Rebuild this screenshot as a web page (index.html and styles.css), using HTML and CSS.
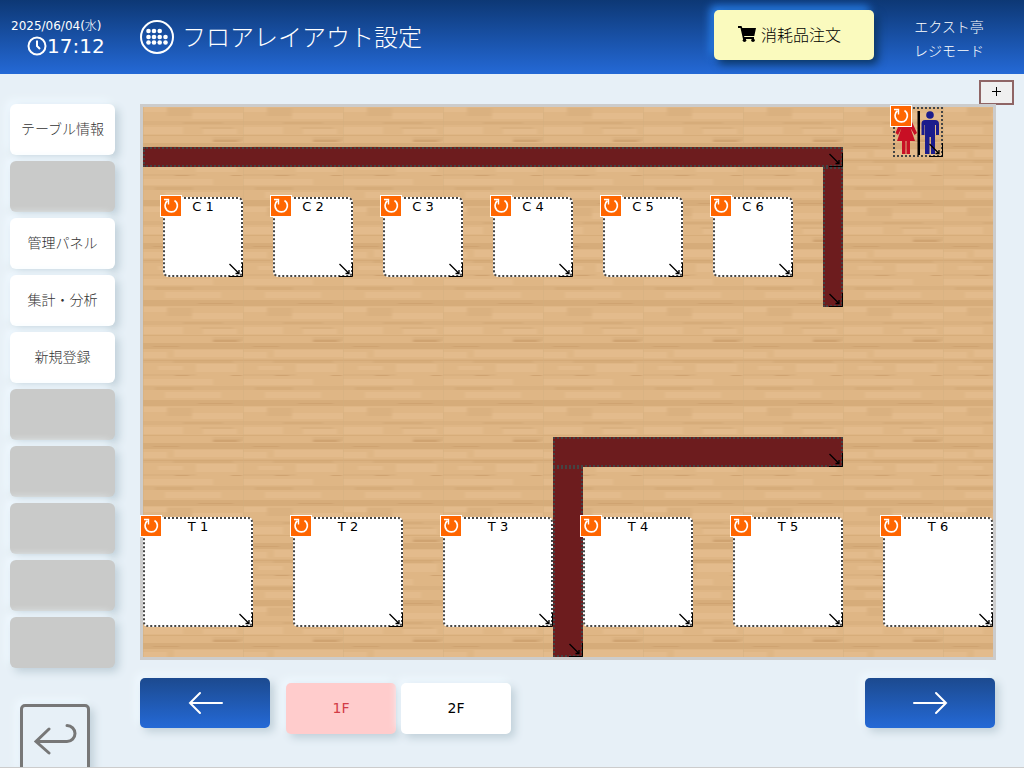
FILE: index.html
```html
<!DOCTYPE html>
<html lang="ja">
<head>
  <meta charset="UTF-8">
  <title>フロアレイアウト設定</title>
  <link rel="stylesheet" href="styles.css">
</head>
<body>
  <svg class="defs" aria-hidden="true">
    <symbol id="icon-rotate" viewBox="0 0 20 20">
      <path d="M13.500 4.500A6.200 6.200 0 1 1 6.500 4.800" fill="none" stroke="#fff" stroke-width="1.700"/>
      <path d="M3 3.500H7.500V8.500" fill="none" stroke="#fff" stroke-width="1.400"/>
    </symbol>
    <symbol id="icon-resize" viewBox="0 0 15 15">
      <path d="M1.500 2L10.500 11M11 8V11.500H7.500" fill="none" stroke="#000" stroke-width="1.300"/>
      <path d="M14.500 1V14.500H1" fill="none" stroke="#000"/>
    </symbol>
    <symbol id="icon-toilet" viewBox="0 0 50 50">
      <g fill="#c80f24">
        <circle cx="13" cy="8" r="4"/>
        <path d="M9 13H17Q18 13 19 15L24 26L21.500 28L17.500 21L22 34H4L8.500 21L5 28L2.500 26L7 15Q8 13 9 13Z"/>
        <path d="M9 33H12.500V47H9ZM13.500 33H17V47H13.500Z"/>
      </g>
      <path d="M24.500 4H27V48H24.500Z"/>
      <g fill="#1b1c8c">
        <circle cx="37" cy="8" r="3.800"/>
        <path d="M32 13H42Q46 13 46 17V28H43V18H42V47H38V30H36.500V47H32V18H31.500V28H28.500V17Q28.500 13 32 13Z"/>
      </g>
    </symbol>
  </svg>

  <header class="header">
    <div class="datetime">
      <div class="date">2025/06/04(水)</div>
      <div class="time">
        <svg class="clock" viewBox="0 0 20 20" fill="none" stroke="#fff" stroke-width="2">
          <circle cx="10" cy="10" r="8.500"/>
          <path d="M10 4.500V10L13 13"/>
        </svg>17:12
      </div>
    </div>
    <svg class="logo" viewBox="0 0 34 34" fill="#fff">
      <circle cx="17" cy="17" r="16" fill="none" stroke="#fff" stroke-width="2"/>
      <circle cx="8.500" cy="11" r="2.300"/><circle cx="14" cy="11" r="2.300"/><circle cx="19.700" cy="11" r="2.300"/>
      <circle cx="8.500" cy="17" r="2.300"/><circle cx="14" cy="17" r="2.300"/><circle cx="19.700" cy="17" r="2.300"/><circle cx="25.500" cy="17" r="2.300"/>
      <circle cx="8.500" cy="22.500" r="2.300"/><circle cx="14" cy="22.500" r="2.300"/><circle cx="19.700" cy="22.500" r="2.300"/><circle cx="25.500" cy="22.500" r="2.300"/>
    </svg>
    <h1 class="title">フロアレイアウト設定</h1>
    <button class="order-btn">
      <svg class="cart" viewBox="0 0 18 16">
        <path d="M0 0H3.500L4.300 2H18L16.300 10H6L6.400 11H16V13H5L2.500 2H0Z"/>
        <circle cx="6.500" cy="14.200" r="1.800"/><circle cx="15" cy="14.200" r="1.800"/>
      </svg>消耗品注文
    </button>
    <div class="shop">
      <div>エクスト亭</div>
      <div>レジモード</div>
    </div>
  </header>

  <div class="container">
    <nav class="sidebar">
      <button class="menu-btn">テーブル情報</button>
      <button class="menu-btn" disabled></button>
      <button class="menu-btn">管理パネル</button>
      <button class="menu-btn">集計・分析</button>
      <button class="menu-btn">新規登録</button>
      <button class="menu-btn" disabled></button>
      <button class="menu-btn" disabled></button>
      <button class="menu-btn" disabled></button>
      <button class="menu-btn" disabled></button>
      <button class="menu-btn" disabled></button>
      <button class="back-btn" aria-label="戻る">
        <svg viewBox="0 0 44 32" fill="none" stroke="#777" stroke-width="3" stroke-linecap="round">
          <path d="M16 6L3 18.500L16 30M4 18.500H34A8 8 0 0 0 34 2.500"/>
        </svg>
      </button>
    </nav>

    <main class="main">
      <div class="toolbar">
        <button class="add-btn" aria-label="追加"><svg viewBox="0 0 10 10"><path d="M4.500 0V9M0 4.500H9" stroke="#000"/></svg></button>
      </div>

      <div class="floor" id="floor">
        <svg class="wood" width="100%" height="100%" aria-hidden="true">
          <defs>
            <filter id="grain" x="0" y="0" width="100%" height="100%">
              <feGaussianBlur stdDeviation="1.500 0.500"/>
            </filter>
            <pattern id="wood" width="100" height="100" patternUnits="userSpaceOnUse">
              <rect width="100" height="100" fill="#dfb685"/>
              <g filter="url(#grain)">
                <path d="M-5 -5H105V105H-5Z" fill="#dfb685"/>
                <g fill="#e3bb8c">
                  <path d="M0 0H24V5H0ZM49 6H105V12H49ZM-5 20H40V27H-5ZM60 22H94V27H60ZM31 43H105V50H31ZM-5 45H24V51H-5ZM53 57H94V65H53ZM15 59H40V63H15ZM-5 72H70V78H-5ZM22 85H78V91H22Z"/>
                </g>
                <g fill="#dab180">
                  <path d="M-5 14H105V18H-5ZM24 1H49V9H24ZM70 30H105V34H70ZM-5 52H105V56H-5ZM-5 67H53V69H-5ZM-5 79H105V83H-5ZM58 20H90V22H58Z"/>
                </g>
                <g fill="#d6ac7a">
                  <path d="M-5 36H105V42H-5ZM70 32H98V35H70ZM-5 93H105V99H-5ZM30 53H90V56H30ZM40 15H80V17H40ZM12 80H50V83H12Z"/>
                </g>
                <g fill="#cfa371">
                  <path d="M70 33H94V35H70ZM-5 28H105V28.500H-5ZM-5 53H105V53.600H-5ZM32 68H46V69H32ZM88 68H99V69H88ZM10 39H36V40H10ZM55 96H90V97H55Z"/>
                </g>
              </g>
              <path d="M0 0H1V100H0Z" fill="#cfae80" opacity=".4"/>
            </pattern>
          </defs>
          <rect width="100%" height="100%" fill="url(#wood)"/>
        </svg>
      </div>

      <div class="footer">
        <button class="arrow-btn" aria-label="前へ">
          <svg viewBox="0 0 36 24"><path d="M13 2L3 12L13 22M3 12H35"/></svg>
        </button>
        <div class="tabs">
          <button class="tab active">1F</button>
          <button class="tab">2F</button>
        </div>
        <button class="arrow-btn next" aria-label="次へ">
          <svg viewBox="0 0 36 24"><path d="M24 2L34 12L24 22M34 12H2"/></svg>
        </button>
      </div>
    </main>
  </div>

  <script>
    const items = [
      { type: 'wall', x: 0, y: 40, w: 700, h: 20 },
      { type: 'wall', x: 680, y: 60, w: 20, h: 140 },
      { type: 'wall', x: 410, y: 330, w: 290, h: 30 },
      { type: 'wall', x: 410, y: 360, w: 30, h: 190 },
      { type: 'toilet', x: 750, y: 0, w: 50, h: 50 },
      { type: 'table', name: 'C 1', x: 20, y: 90, w: 80, h: 80 },
      { type: 'table', name: 'C 2', x: 130, y: 90, w: 80, h: 80 },
      { type: 'table', name: 'C 3', x: 240, y: 90, w: 80, h: 80 },
      { type: 'table', name: 'C 4', x: 350, y: 90, w: 80, h: 80 },
      { type: 'table', name: 'C 5', x: 460, y: 90, w: 80, h: 80 },
      { type: 'table', name: 'C 6', x: 570, y: 90, w: 80, h: 80 },
      { type: 'table', name: 'T 1', x: 0, y: 410, w: 110, h: 110 },
      { type: 'table', name: 'T 2', x: 150, y: 410, w: 110, h: 110 },
      { type: 'table', name: 'T 3', x: 300, y: 410, w: 110, h: 110 },
      { type: 'table', name: 'T 4', x: 440, y: 410, w: 110, h: 110 },
      { type: 'table', name: 'T 5', x: 590, y: 410, w: 110, h: 110 },
      { type: 'table', name: 'T 6', x: 740, y: 410, w: 110, h: 110 }
    ];

    const floor = document.getElementById('floor');

    items.forEach(item => {
      const el = document.createElement('div');
      el.className = `item ${item.type}`;
      el.style.cssText = `left:${item.x}px;top:${item.y}px;width:${item.w}px;height:${item.h}px`;
      let html = '';
      if (item.type === 'toilet') html += '<svg class="toilet-icon"><use href="#icon-toilet"/></svg>';
      if (item.name) html += `<span class="name">${item.name}</span>`;
      // 壁は回転できない
      if (item.type !== 'wall') html += '<button class="rotate" aria-label="回転"><svg><use href="#icon-rotate"/></svg></button>';
      html += '<svg class="resize"><use href="#icon-resize"/></svg>';
      el.innerHTML = html;
      floor.appendChild(el);
    });
  </script>
</body>
</html>
```
FILE: styles.css
```css
* {
  box-sizing: border-box;
}
body {
  margin: 0;
  height: 100vh;
  overflow: hidden;
  display: flex;
  flex-direction: column;
  background: #e7f0f7;
  border-bottom: 1px solid #ccc;
  font-family: "DejaVu Sans", "Noto Sans CJK JP Light", "Noto Sans CJK JP", sans-serif;
  font-size: 14px;
}
button {
  font: inherit;
  padding: 0;
  border: none;
  cursor: pointer;
}
svg {
  display: block;
}
.defs {
  position: absolute;
  width: 0;
  height: 0;
}

/* ヘッダー */
.header {
  flex: none;
  height: 74px;
  display: flex;
  align-items: center;
  color: #fff;
  background: linear-gradient(#0d3875, #2469d6);
}
.datetime {
  width: 140px;
  padding-left: 11px;
}
.date {
  font-size: 12px;
  line-height: 18px;
}
.time {
  display: flex;
  align-items: center;
  padding-left: 16px;
  font-size: 20px;
  line-height: 22px;
}
.clock {
  width: 20px;
  height: 20px;
}
.logo {
  width: 34px;
  height: 34px;
}
.title {
  flex: 1;
  margin: 0 0 4px 8px;
  font-size: 24px;
  font-weight: normal;
}
.order-btn {
  display: flex;
  align-items: center;
  justify-content: center;
  gap: 5px;
  width: 160px;
  height: 50px;
  margin-bottom: 4px;
  padding: 0 9px 3px 0;
  border-radius: 5px;
  background: #fafabe;
  color: #000;
  font-size: 16px;
  box-shadow: 4px 4px 8px #0b3562, -4px -4px 8px #2a82f0;
}
.cart {
  width: 18px;
  height: 16px;
}
.shop {
  width: 150px;
  padding-top: 3px;
  text-align: center;
  line-height: 24px;
}

.container {
  flex: 1;
  display: flex;
  min-height: 0;
}

/* サイドメニュー */
.sidebar {
  flex: none;
  width: 140px;
  padding: 30px 0 0 10px;
  display: flex;
  flex-direction: column;
  gap: 6px;
}
.menu-btn {
  flex: none;
  width: 105px;
  height: 51px;
  padding-bottom: 3px;
  border-radius: 6px;
  background: #fff;
  color: #333;
  box-shadow: 4px 4px 8px #c0d0d9, -4px -4px 8px #f0f9ff;
}
.menu-btn:disabled {
  background: #c9cac9;
}
.back-btn {
  flex: none;
  width: 70px;
  height: 70px;
  margin: 30px 0 0 10px;
  padding: 0 10px;
  border: 3px solid #777;
  border-radius: 5px;
  background: #e7f0f7;
  box-shadow: 4px 4px 8px #c0d0d9, -4px -4px 8px #f0f9ff;
}

/* フロア */
.main {
  flex: 1;
  min-width: 0;
  padding: 6px 28px 0 0;
}
.toolbar {
  display: flex;
  justify-content: flex-end;
  margin-right: -18px;
}
.add-btn {
  display: flex;
  align-items: center;
  justify-content: center;
  width: 35px;
  height: 25px;
  margin-bottom: -1px;
  padding-bottom: 2px;
  border: 2px solid #8f6565;
  background: #efefef;
}
.add-btn svg {
  width: 10px;
  height: 10px;
}
.floor {
  position: relative;
  height: 556px;
  border: 3px solid #ccc;
}
.item {
  position: absolute;
  border: 2px dotted #444;
  text-align: center;
}
.wall {
  background: #6d1c1e;
}
.table {
  background: #fff;
  border-radius: 5px;
}
.name {
  display: block;
  font-size: 13px;
  line-height: 16px;
}
.toilet-icon {
  width: 50px;
  height: 50px;
  margin: -2px;
}
.rotate {
  position: absolute;
  top: -4px;
  left: -5px;
  width: 22px;
  height: 22px;
  border: 1px solid #fff;
  background: #ff6600;
}
.rotate svg {
  width: 20px;
  height: 20px;
}
.resize {
  position: absolute;
  right: -2px;
  bottom: -2px;
  width: 15px;
  height: 15px;
}

/* フッター */
.footer {
  display: flex;
  padding-top: 18px;
}
.arrow-btn {
  display: flex;
  align-items: center;
  justify-content: center;
  width: 130px;
  height: 50px;
  border-radius: 5px;
  background: linear-gradient(#1c4a8f, #2469d6);
  box-shadow: 4px 4px 8px #c0d0d9, -4px -4px 8px #f0f9ff;
}
.arrow-btn svg {
  width: 36px;
  height: 24px;
  fill: none;
  stroke: #fff;
  stroke-width: 2;
  stroke-linecap: round;
}
.next {
  margin-right: 1px;
}
.tabs {
  flex: 1;
  display: flex;
  gap: 5px;
  padding: 5px 0 0 16px;
}
.tab {
  width: 110px;
  height: 51px;
  padding-bottom: 2px;
  border-radius: 5px;
  background: #fff;
  color: #000;
  box-shadow: 4px 4px 8px #c0d0d9, -4px -4px 8px #f0f9ff;
}
.tab.active {
  background: #ffcccc;
  color: #d23c46;
}
```
